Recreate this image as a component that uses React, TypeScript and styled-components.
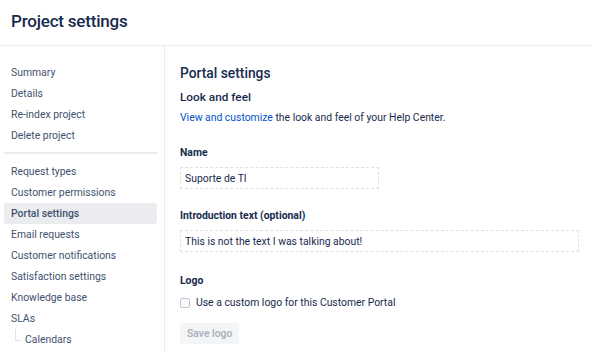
import React from 'react';
import styled, { createGlobalStyle } from 'styled-components';

const GlobalStyle = createGlobalStyle`
  html, body {
    margin: 0;
    padding: 0;
    background: #fff;
    font-family: Roboto, "Noto Sans", sans-serif;
    color: #172b4d;
  }
`;

const Page = styled.div`
  width: 591px;
  height: 352px;
  overflow: hidden;
  display: flex;
  flex-direction: column;
`;

const Header = styled.header`
  height: 46px;
  border-bottom: 1px solid #ebecf0;
  padding: 0 11px;
  display: flex;
  align-items: center;
  box-sizing: border-box;
  flex-shrink: 0;
`;

const Title = styled.h1`
  margin: 0 0 4px;
  font-size: 17px;
  font-weight: 500;
  color: #172b4d;
  letter-spacing: -0.2px;
`;

const Body = styled.div`
  display: flex;
  flex: 1;
`;

const Sidebar = styled.nav`
  width: 165px;
  box-sizing: border-box;
  border-right: 1px solid #ebecf0;
  padding: 16px 7px 0 4px;
  display: flex;
  flex-direction: column;
`;

const NavItem = styled.div<{ $active?: boolean; $child?: boolean }>`
  height: 21px;
  flex-shrink: 0;
  display: flex;
  align-items: center;
  padding-left: ${(p) => (p.$child ? 21 : 7)}px;
  font-size: 10.4px;
  color: #42526e;
  border-radius: 3px;
  background: ${(p) => (p.$active ? '#ebecf0' : 'transparent')};
  font-weight: ${(p) => (p.$active ? 500 : 400)};
  position: relative;
`;

const TreeLine = styled.span`
  position: absolute;
  left: 11px;
  top: 0;
  width: 5px;
  height: 11px;
  border-left: 1px solid #dfe1e6;
  border-bottom: 1px solid #dfe1e6;
`;

const Divider = styled.hr`
  border: none;
  border-top: 2px solid #ebecf0;
  margin: 6px 0 7px;
  width: 100%;
`;

const Main = styled.main`
  flex: 1;
  padding: 17px 12px 0 15px;
`;

const PageHeading = styled.h2`
  margin: 0;
  font-size: 13.8px;
  font-weight: 500;
  color: #172b4d;
  line-height: 20px;
`;

const SubHeading = styled.h3`
  margin: 5px 0 0;
  font-size: 11.8px;
  font-weight: 500;
  color: #172b4d;
  line-height: 18px;
`;

const Text = styled.p`
  margin: 5px 0 0;
  font-size: 10.4px;
  line-height: 14px;
  color: #172b4d;
`;

const Link = styled.a`
  color: #0052cc;
  text-decoration: none;
`;

const Field = styled.div<{ $top: number }>`
  margin-top: ${(p) => p.$top}px;
  display: flex;
  flex-direction: column;
`;

const Label = styled.label`
  font-size: 10.4px;
  font-weight: 700;
  color: #172b4d;
  line-height: 14px;
`;

const Input = styled.div<{ $width: string }>`
  margin-top: 7px;
  width: ${(p) => p.$width};
  height: 22px;
  box-sizing: border-box;
  border: 1px dashed #dfe1e6;
  padding: 0 4px;
  display: flex;
  align-items: center;
  font-size: 10.4px;
  color: #172b4d;
`;

const CheckRow = styled.div`
  margin-top: 8px;
  display: flex;
  align-items: center;
  gap: 6px;
  font-size: 10.4px;
  color: #172b4d;
`;

const Checkbox = styled.span`
  width: 8px;
  height: 8px;
  border: 1px solid #c1c7d0;
  border-radius: 2px;
  background: #fafbfc;
`;

const Button = styled.button`
  margin-top: 14px;
  align-self: flex-start;
  height: 21px;
  padding: 0 7px;
  border: none;
  border-radius: 3px;
  background: #f4f5f7;
  color: #a5adba;
  font-family: inherit;
  font-size: 10.4px;
  font-weight: 500;
`;

const topItems = ['Summary', 'Details', 'Re-index project', 'Delete project'];
const bottomItems = [
  'Request types',
  'Customer permissions',
  'Portal settings',
  'Email requests',
  'Customer notifications',
  'Satisfaction settings',
  'Knowledge base',
  'SLAs',
];

const App: React.FC = () => {
  return (
    <Page>
      <GlobalStyle />
      <Header>
        <Title>Project settings</Title>
      </Header>
      <Body>
        <Sidebar>
          {topItems.map((item) => (
            <NavItem key={item}>{item}</NavItem>
          ))}
          <Divider />
          {bottomItems.map((item) => (
            <NavItem key={item} $active={item === 'Portal settings'}>
              {item}
            </NavItem>
          ))}
          <NavItem $child>
            <TreeLine />
            Calendars
          </NavItem>
        </Sidebar>
        <Main>
          <PageHeading>Portal settings</PageHeading>
          <SubHeading>Look and feel</SubHeading>
          <Text>
            <Link href="#">View and customize</Link> the look and feel of your Help Center.
          </Text>
          <Field $top={21}>
            <Label>Name</Label>
            <Input $width="199px">Suporte de TI</Input>
          </Field>
          <Field $top={20}>
            <Label>Introduction text (optional)</Label>
            <Input $width="100%">This is not the text I was talking about!</Input>
          </Field>
          <Field $top={22}>
            <Label>Logo</Label>
            <CheckRow>
              <Checkbox />
              Use a custom logo for this Customer Portal
            </CheckRow>
            <Button>Save logo</Button>
          </Field>
        </Main>
      </Body>
    </Page>
  );
};

export default App;
